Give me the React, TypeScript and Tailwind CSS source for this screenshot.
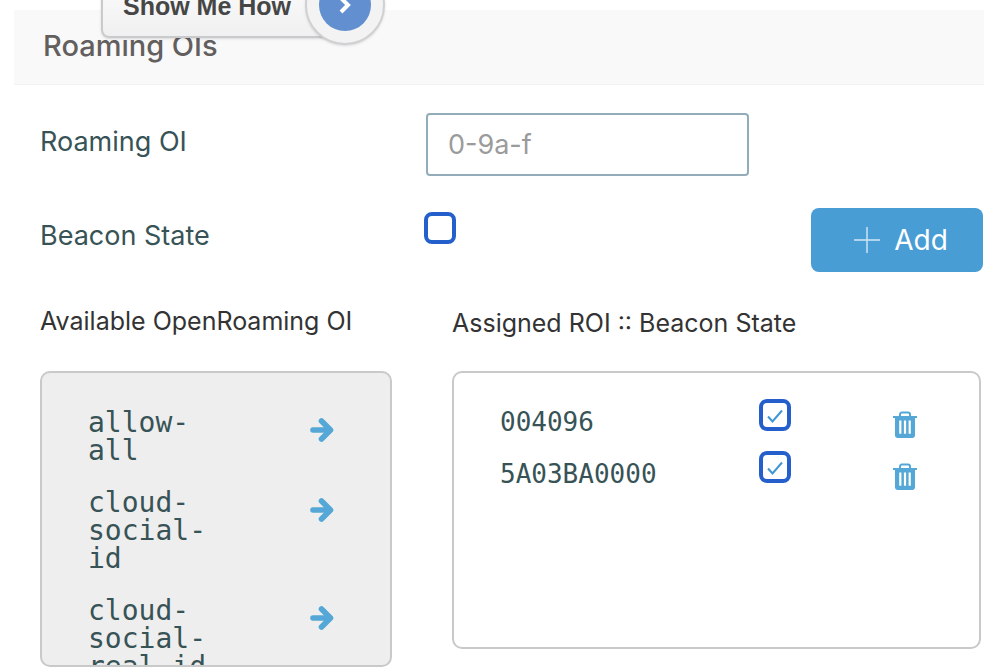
import React, { useState } from 'react';

interface AssignedOI {
    oi: string;
    beacon: boolean;
}

const AVAILABLE = ['allow-all', 'cloud-social-id', 'cloud-social-real-id'];

const ArrowIcon: React.FC = () => (
    <svg
        viewBox="0 0 24 24"
        className="size-6"
        fill="none"
        stroke="currentColor"
        strokeWidth="5.6"
        strokeLinecap="round"
        strokeLinejoin="round"
        aria-hidden="true"
    >
        <path d="M3 12H19" />
        <path d="M11.5 3L20.5 12L11.5 21" />
    </svg>
);

const TrashIcon: React.FC = () => (
    <svg viewBox="0 0 24 28" className="h-7 w-6" aria-hidden="true">
        <path d="M7 5V3.6Q7 1.6 9 1.6H15Q17 1.6 17 3.6V5" fill="none" stroke="currentColor" strokeWidth="2" />
        <path d="M0 5H24V7H22V24.6Q22 27 19.6 27H4.4Q2 27 2 24.6V7H0Z" fill="currentColor" />
        <path d="M7.3 9.4V22.8M12 9.4V22.8M16.7 9.4V22.8" stroke="#fff" strokeWidth="2.2" />
    </svg>
);

interface CheckboxProps {
    id?: string;
    label?: string;
    checked: boolean;
    onChange: (checked: boolean) => void;
}

const Checkbox: React.FC<CheckboxProps> = ({ id, label, checked, onChange }) => (
    <span className="grid size-8 place-items-center">
        <input
            id={id}
            type="checkbox"
            aria-label={label}
            checked={checked}
            onChange={(e) => onChange(e.target.checked)}
            className="col-start-1 row-start-1 size-8 appearance-none rounded-lg border-4 border-[#255fcc] bg-white"
        />
        {checked && (
            <svg viewBox="0 0 16 14" className="pointer-events-none col-start-1 row-start-1 mt-[2px] h-[14px] w-4" aria-hidden="true">
                <path d="M1 7.5L5.5 12.5L15 1.5" fill="none" stroke="#3f97d3" strokeWidth="2" />
            </svg>
        )}
    </span>
);

const ShowMeHow: React.FC = () => (
    <button type="button" className="absolute -top-[43px] left-[101px] flex items-center font-['Liberation_Sans',sans-serif]">
        <span className="flex h-[73px] w-[244px] items-end rounded-lg border-2 border-[#c9cacb] bg-linear-to-b from-white to-[#f0f0f0] pb-[16px] pl-5 text-[25px] leading-7 font-bold text-[#464646] shadow">
            Show Me How
        </span>
        <span className="-ml-10 mt-2 grid size-20 place-items-center rounded-full border-2 border-[#d0d1d3] bg-[#f3f3f4] shadow">
            <span className="grid size-[52px] place-items-center rounded-full bg-[#628fd0]">
                <svg viewBox="0 0 14 20" className="h-5 w-[14px]" aria-hidden="true">
                    <path d="M3 3L10 10L3 17" fill="none" stroke="#fff" strokeWidth="4" />
                </svg>
            </span>
        </span>
    </button>
);

export default function App() {
    const [roamingOI, setRoamingOI] = useState('');
    const [beacon, setBeacon] = useState(false);
    const [assigned, setAssigned] = useState<AssignedOI[]>([
        { oi: '004096', beacon: true },
        { oi: '5A03BA0000', beacon: true },
    ]);

    const assign = (oi: string, state: boolean) => {
        if (oi && !assigned.some((a) => a.oi === oi)) {
            setAssigned([...assigned, { oi, beacon: state }]);
        }
    };

    const toggle = (oi: string, state: boolean) => {
        setAssigned(assigned.map((a) => (a.oi === oi ? { ...a, beacon: state } : a)));
    };

    return (
        <main className="relative overflow-hidden bg-white pt-[10px] pb-[5px] font-[Inter,sans-serif] text-[#375356]">
            <header className="mr-4 ml-[14px] flex h-[75px] items-center border-b border-[#f3f3f3] bg-[#f9f9f9] pb-[2px] pl-[29px]">
                <h1 className="text-[29px] leading-8 font-medium text-[#635f5e]">Roaming OIs</h1>
            </header>
            <ShowMeHow />

            <form
                className="mt-7 mr-[17px] ml-10"
                onSubmit={(e) => {
                    e.preventDefault();
                    assign(roamingOI.trim(), beacon);
                }}
            >
                <div className="grid grid-cols-[386px_1fr]">
                    <label htmlFor="roaming-oi" className="mt-[13px] text-[27px] leading-8">
                        Roaming OI
                    </label>
                    <input
                        id="roaming-oi"
                        type="text"
                        placeholder="0-9a-f"
                        value={roamingOI}
                        onChange={(e) => setRoamingOI(e.target.value)}
                        className="h-[63px] w-[323px] rounded-sm border-2 border-[#92adb9] px-5 text-[27px] placeholder:text-[#9b9b9b]"
                    />
                </div>
                <div className="mt-8 flex">
                    <label htmlFor="beacon-state" className="mt-3 w-[384px] text-[27px] leading-8">
                        Beacon State
                    </label>
                    <div className="mt-1">
                        <Checkbox id="beacon-state" checked={beacon} onChange={setBeacon} />
                    </div>
                    <button
                        type="submit"
                        className="ml-auto flex h-16 w-[172px] items-center justify-center gap-[14px] rounded-lg bg-[#489dd5] pl-2 text-[28px] text-white"
                    >
                        <svg viewBox="0 0 26 26" className="size-[26px]" aria-hidden="true">
                            <path d="M0 13H26M13 0V26" stroke="#d3e8f5" strokeWidth="1.4" />
                        </svg>
                        Add
                    </button>
                </div>
            </form>

            <div className="mt-[33px] mr-[19px] ml-10 grid grid-cols-[352px_1fr] items-start gap-x-[60px]">
                <section>
                    <h2 className="h-[66px] text-[25px] leading-8 text-[#333]">Available OpenRoaming OI</h2>
                    <ul className="h-[296px] overflow-hidden rounded-[10px] border-2 border-[#c9c9c9] bg-[#eee] pt-9 pl-[46px] font-['DejaVu_Sans_Mono',monospace]">
                        {AVAILABLE.map((name) => (
                            <li key={name} className="mb-6 flex items-start justify-between pr-14 text-[28px] leading-7">
                                <span className="w-32">{name}</span>
                                <button
                                    type="button"
                                    aria-label={`Assign ${name}`}
                                    onClick={() => assign(name, false)}
                                    className="mt-[9px] text-[#54a7d6]"
                                >
                                    <ArrowIcon />
                                </button>
                            </li>
                        ))}
                    </ul>
                </section>
                <section>
                    <h2 className="h-[66px] text-[25px] leading-9 text-[#333]">Assigned ROI :: Beacon State</h2>
                    <div className="h-[278px] overflow-hidden rounded-[10px] border-2 border-[#c9c9c9] pt-[26px]">
                        <table className="w-full table-fixed font-['DejaVu_Sans_Mono',monospace] text-[26px] leading-7">
                            <tbody>
                                {assigned.map((a) => (
                                    <tr key={a.oi} className="h-[52px] align-top">
                                        <td className="w-[58%] pt-[9px] pl-[46px]">{a.oi}</td>
                                        <td>
                                            <Checkbox
                                                label={`Beacon state of ${a.oi}`}
                                                checked={a.beacon}
                                                onChange={(state) => toggle(a.oi, state)}
                                            />
                                        </td>
                                        <td className="w-[17%] pt-3 pl-[3px]">
                                            <button
                                                type="button"
                                                aria-label={`Remove ${a.oi}`}
                                                onClick={() => setAssigned(assigned.filter((b) => b.oi !== a.oi))}
                                                className="block text-[#54a7d6]"
                                            >
                                                <TrashIcon />
                                            </button>
                                        </td>
                                    </tr>
                                ))}
                            </tbody>
                        </table>
                    </div>
                </section>
            </div>
        </main>
    );
}
